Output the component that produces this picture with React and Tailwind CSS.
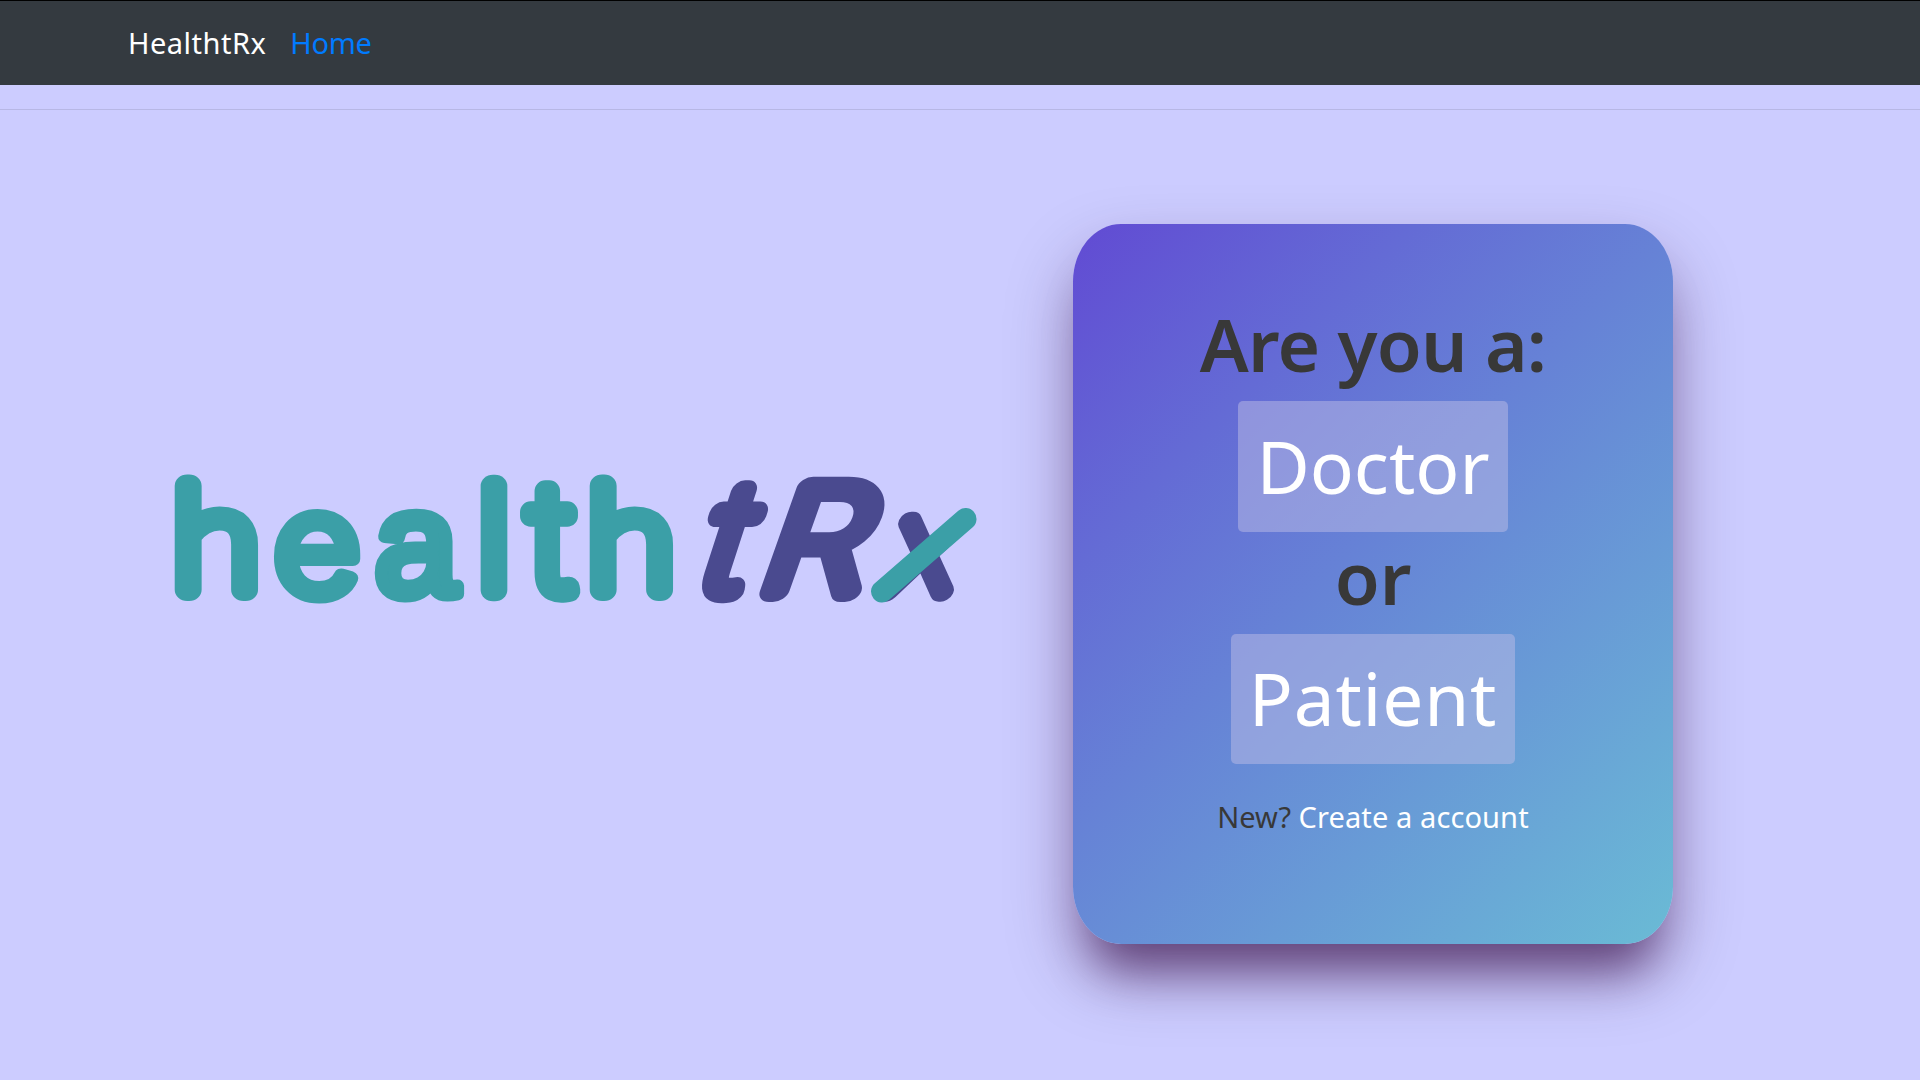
const TEAL = '#3b9fa7';
const INDIGO = '#4a4a8f';

// x = left edge of each letter, sx = horizontal stretch, w = outline width
const LETTERS = [
  { ch: 'h', x: 172.5, sx: 1.11, size: 144, w: 22.5, font: 'Lato', weight: 100, color: TEAL },
  { ch: 'e', x: 273, sx: 1.06, size: 143, w: 14, font: 'Inter', weight: 300, color: TEAL },
  { ch: 'a', x: 375, sx: 1.01, size: 147, w: 13, font: 'Liberation Sans', weight: 400, color: TEAL },
  { ch: 'l', x: 477.5, sx: 1.1, size: 144, w: 22.5, font: 'Lato', weight: 100, color: TEAL },
  { ch: 't', x: 528, sx: 1, size: 149, w: 21.5, font: 'Roboto', weight: 100, color: TEAL },
  { ch: 'h', x: 587.5, sx: 1.11, size: 144, w: 22.5, font: 'Lato', weight: 100, color: TEAL },
  { ch: 't', x: 692, sx: 1, size: 149, w: 21.5, font: 'Roboto', weight: 100, color: INDIGO, skew: -18 },
  { ch: 'R', x: 754, sx: 1.17, size: 142, w: 22, font: 'Inter', weight: 100, color: INDIGO, skew: -19.5 },
  { ch: 'x', x: 881.5, sx: 1.04, size: 144, w: 19.5, font: 'Lato', weight: 100, color: INDIGO, skew: -17 },
];

function Logo() {
  return (
    <svg viewBox="170 465 820 150" className="w-[820px] h-[150px] overflow-visible" strokeLinejoin="round" strokeLinecap="round">
      {LETTERS.map((l, i) => (
        <text
          key={i}
          transform={`translate(${l.x} ${601.5 - l.w / 2}) skewX(${l.skew || 0}) scale(${l.sx} 1)`}
          fill={l.color}
          stroke={l.color}
          strokeWidth={l.w}
          fontFamily={l.font}
          fontWeight={l.weight}
          fontSize={l.size}
        >
          {l.ch}
        </text>
      ))}
      <line x1="882" y1="591.5" x2="965.5" y2="519" stroke={TEAL} strokeWidth="22" />
    </svg>
  );
}

function RoleLink({ className, children }) {
  return (
    <a href="#" className={`rounded-[5px] bg-[#bcbce6]/50 pb-0.5 flex items-center justify-center text-white ${className}`}>
      {children}
    </a>
  );
}

export default function App() {
  return (
    <div className="h-screen overflow-hidden bg-[#ccccff] font-['Noto_Sans',sans-serif] text-[#383838]">
      <nav className="h-[85px] border-t border-black bg-[#343a40] flex items-center gap-6 pl-32 text-[29px] text-white">
        <a href="#" className="tracking-[0.5px]">HealthtRx</a>
        <a href="#" className="text-[#007bff] tracking-[-0.3px]">Home</a>
      </nav>
      <hr className="mt-6 border-black/10" />
      <main className="flex items-start pt-[114px]">
        <div className="w-[1073px] shrink-0 pl-[170px] pt-[241px]">
          <Logo />
        </div>
        <section className="w-[600px] h-[720px] pt-[75px] rounded-[8%] bg-linear-135 from-[#614ad3] to-[#6abbd5] flex flex-col items-center text-[73px] leading-[90px] shadow-[0_32px_65px_rgba(46,0,57,0.36),0_45px_45px_-22px_rgba(46,0,57,0.5)]">
          <h1 className="font-semibold tracking-[-0.8px]">Are you a:</h1>
          <RoleLink className="w-[270px] h-[131px] mt-3">Doctor</RoleLink>
          <h1 className="font-semibold">or</h1>
          <RoleLink className="w-[284px] h-[130px] mt-3 tracking-[0.8px]">Patient</RoleLink>
          <p className="mt-[31px] text-[29px] leading-[44px]">
            New? <a href="#" className="text-white tracking-[0.1px]">Create a account</a>
          </p>
        </section>
      </main>
    </div>
  );
}
